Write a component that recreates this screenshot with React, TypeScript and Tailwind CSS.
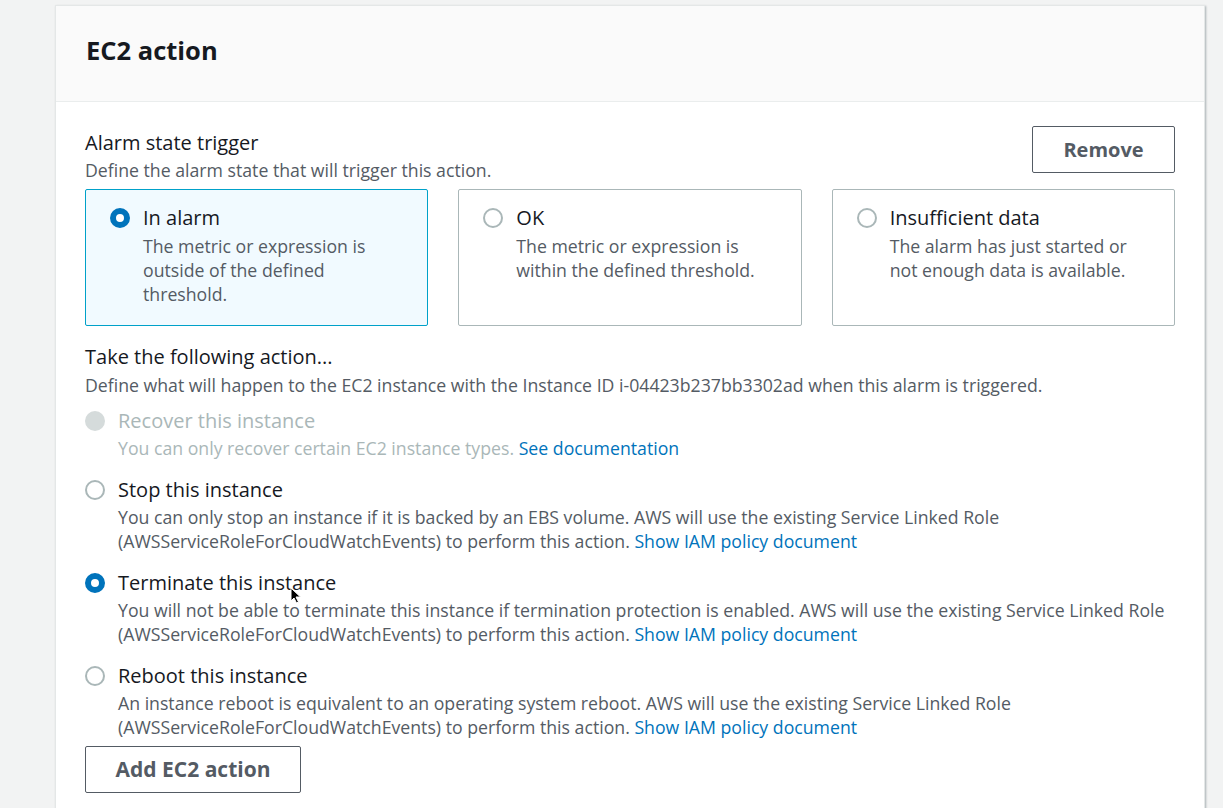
import React from "react";

const font = { fontFamily: '"Open Sans", "Noto Sans", Arial, sans-serif' };

function Radio({ state }: { state: "on" | "off" | "disabled" }) {
    if (state === "on") {
        return <span className="block w-[20px] h-[20px] rounded-full border-[6px] border-[#0073bb] bg-white shrink-0" />;
    }
    if (state === "disabled") {
        return <span className="block w-[20px] h-[20px] rounded-full bg-[#d5dbdb] shrink-0" />;
    }
    return <span className="block w-[20px] h-[20px] rounded-full border-2 border-[#aab7b8] bg-white shrink-0" />;
}

function StateCard({ title, desc, selected }: { title: string; desc: string; selected?: boolean }) {
    return (
        <div
            className={
                selected
                    ? "flex-1 h-[137px] rounded-[2px] border border-[#00a1c9] bg-[#f1faff] px-[24px] pt-[15px] flex gap-[13px]"
                    : "flex-1 h-[137px] rounded-[2px] border border-[#aab7b8] bg-white px-[24px] pt-[15px] flex gap-[13px]"
            }
        >
            <div className="pt-[3px]">
                <Radio state={selected ? "on" : "off"} />
            </div>
            <div className="flex flex-col pr-[2px]">
                <span className="text-[20px] leading-[26px] text-[#16191f]">{title}</span>
                <span className="mt-[3px] text-[17.7px] leading-[24px] text-[#545b64]">{desc}</span>
            </div>
        </div>
    );
}

function ActionOption({
    title,
    state,
    children,
}: {
    title: string;
    state: "on" | "off" | "disabled";
    children: React.ReactNode;
}) {
    const disabled = state === "disabled";
    return (
        <div className="flex gap-[13px]">
            <div className="pt-[3px]">
                <Radio state={state} />
            </div>
            <div className="flex flex-col">
                <span className={disabled ? "text-[20px] leading-[26px] text-[#aab7b8]" : "text-[20px] leading-[26px] text-[#16191f]"}>
                    {title}
                </span>
                <span
                    className={
                        disabled
                            ? "mt-[2px] text-[17.7px] leading-[24px] text-[#aab7b8] whitespace-nowrap"
                            : "mt-[2px] text-[17.7px] leading-[24px] text-[#545b64] whitespace-nowrap"
                    }
                >
                    {children}
                </span>
            </div>
        </div>
    );
}

const Link = ({ children }: { children: React.ReactNode }) => (
    <span className="text-[#0073bb]">{children}</span>
);

export default function App() {
    return (
        <div className="w-[1223px] h-[808px] bg-[#f2f3f3] overflow-hidden pt-[5px] pl-[55px]" style={font}>
            <div className="relative w-[1150px] h-[900px] bg-white border border-[#e4e7e7] shadow-[1px_1px_2px_rgba(0,28,36,0.3)]">
                <div className="h-[96px] bg-[#fafafa] border-b border-[#eaeded] px-[30px] flex items-center">
                    <h2 className="text-[25.5px] font-bold text-[#16191f] pb-[6px]">EC2 action</h2>
                </div>

                <div className="px-[29px] pt-[28px]">
                    <div className="flex items-start justify-between">
                        <div className="flex flex-col">
                            <span className="text-[20px] leading-[26px] text-[#16191f]">Alarm state trigger</span>
                            <span className="mt-[2px] text-[17.7px] leading-[24px] text-[#545b64]">Define the alarm state that will trigger this action.</span>
                        </div>
                        <button className="-mt-[4px] w-[143px] h-[47px] rounded-[2px] border border-[#545b64] text-[20px] font-bold text-[#545b64]">
                            Remove
                        </button>
                    </div>

                    <div className="mt-[7px] flex gap-[30px]">
                        <StateCard selected title="In alarm" desc="The metric or expression is outside of the defined threshold." />
                        <StateCard title="OK" desc="The metric or expression is within the defined threshold." />
                        <StateCard title="Insufficient data" desc="The alarm has just started or not enough data is available." />
                    </div>

                    <div className="mt-[18px] flex flex-col">
                        <span className="text-[20px] leading-[26px] text-[#16191f]">Take the following action...</span>
                        <span className="mt-[3px] text-[17.7px] leading-[24px] text-[#545b64] whitespace-nowrap">
                            Define what will happen to the EC2 instance with the Instance ID i-04423b237bb3302ad when this alarm is triggered.
                        </span>
                    </div>

                    <div className="mt-[11px] flex flex-col gap-[17px]">
                        <ActionOption title="Recover this instance" state="disabled">
                            You can only recover certain EC2 instance types. <Link>See documentation</Link>
                        </ActionOption>
                        <ActionOption title="Stop this instance" state="off">
                            You can only stop an instance if it is backed by an EBS volume. AWS will use the existing Service Linked Role
                            <br />
                            (AWSServiceRoleForCloudWatchEvents) to perform this action. <Link>Show IAM policy document</Link>
                        </ActionOption>
                        <div className="relative">
                            <ActionOption title="Terminate this instance" state="on">
                                You will not be able to terminate this instance if termination protection is enabled. AWS will use the existing Service Linked Role
                                <br />
                                (AWSServiceRoleForCloudWatchEvents) to perform this action. <Link>Show IAM policy document</Link>
                            </ActionOption>
                            {/* mouse pointer */}
                            <svg className="absolute left-[205px] top-[17px]" width="12" height="17" viewBox="0 0 12 17">
                                <path d="M1 1 L1 14 L4 11 L6.5 16 L8.5 15 L6 10 L10.5 10 Z" fill="#000" stroke="#fff" strokeWidth="1" />
                            </svg>
                        </div>
                        <ActionOption title="Reboot this instance" state="off">
                            An instance reboot is equivalent to an operating system reboot. AWS will use the existing Service Linked Role
                            <br />
                            (AWSServiceRoleForCloudWatchEvents) to perform this action. <Link>Show IAM policy document</Link>
                        </ActionOption>
                    </div>

                    <button className="mt-[7px] w-[216px] h-[47px] rounded-[2px] border border-[#545b64] text-[21px] font-bold text-[#545b64]">
                        Add EC2 action
                    </button>
                </div>
            </div>
        </div>
    );
}
